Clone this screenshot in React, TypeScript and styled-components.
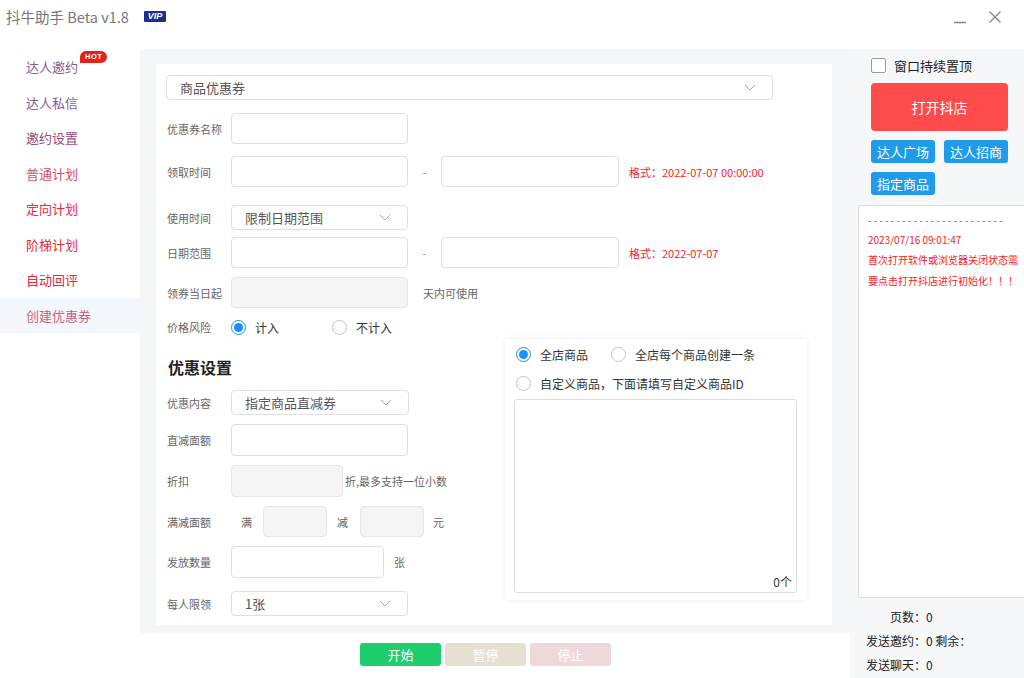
import React from 'react';
import styled, { createGlobalStyle } from 'styled-components';

const GlobalStyle = createGlobalStyle`
  html, body {
    margin: 0;
    padding: 0;
    background: #ffffff;
  }
  body {
    font-family: "Noto Sans CJK SC", "Liberation Sans", sans-serif;
  }
  * {
    box-sizing: border-box;
  }
`;

const Window = styled.div`
  width: 1024px;
  height: 678px;
  display: flex;
  flex-direction: column;
  background: #fff;
  overflow: hidden;
`;

const TitleBar = styled.div`
  height: 49px;
  flex-shrink: 0;
  display: flex;
  align-items: flex-start;
  padding: 7px 22px 0 6px;
`;

const Title = styled.div`
  font-size: 14.5px;
  color: #777;
  line-height: 20px;
  display: flex;
  align-items: center;
`;

const VipBadge = styled.span`
  display: inline-block;
  margin-left: 15px;
  height: 11px;
  padding: 0 4px;
  background: #1c2f8e;
  color: #fff;
  font-family: "Liberation Sans", sans-serif;
  font-style: italic;
  font-weight: bold;
  font-size: 9px;
  line-height: 11px;
  border-radius: 1px;
  margin-top: -2px;
`;

const WinControls = styled.div`
  margin-left: auto;
  display: flex;
  gap: 21px;
  margin-top: 3px;
`;

const Body = styled.div`
  flex: 1;
  display: flex;
  min-height: 0;
`;

const Sidebar = styled.div`
  width: 140px;
  flex-shrink: 0;
  background: #fff;
`;

const NavItem = styled.div<{ $color: string; $active?: boolean }>`
  position: relative;
  height: 35.5px;
  display: flex;
  align-items: center;
  padding-left: 26px;
  font-size: 13px;
  color: ${(p) => p.$color};
  background: ${(p) => (p.$active ? '#f3f7fc' : 'transparent')};
`;

const HotBadge = styled.span`
  position: absolute;
  left: 80px;
  top: 2px;
  height: 12px;
  padding: 0 5px;
  background: #e3231a;
  color: #fff;
  font-family: "Liberation Sans", sans-serif;
  font-weight: bold;
  font-size: 7.5px;
  line-height: 12px;
  letter-spacing: 0.5px;
  border-radius: 6px 6px 6px 0;
`;

const Main = styled.div`
  width: 710px;
  flex-shrink: 0;
  display: flex;
  flex-direction: column;
`;

const Content = styled.div`
  background: #f5f6f8;
  padding: 15px 18px 8px 16px;
`;

const Card = styled.div`
  background: #fff;
  height: 561px;
  padding: 11px 10px 0 10px;
`;

const SelectBox = styled.div<{ $w: number; $h?: number }>`
  width: ${(p) => p.$w}px;
  height: ${(p) => p.$h ?? 25}px;
  border: 1px solid #dcdfe6;
  border-radius: 4px;
  display: flex;
  align-items: center;
  justify-content: space-between;
  padding: 0 16px 0 13px;
  font-size: 13px;
  color: #555;
  background: #fff;
`;

const Row = styled.div<{ $mt: number; $h: number }>`
  display: flex;
  align-items: center;
  margin-top: ${(p) => p.$mt}px;
  height: ${(p) => p.$h}px;
`;

const Label = styled.div`
  width: 65px;
  flex-shrink: 0;
  padding-left: 1px;
  font-size: 11px;
  color: #666;
`;

const InputBox = styled.div<{ $w: number; $disabled?: boolean; $ml?: number }>`
  width: ${(p) => p.$w}px;
  height: 100%;
  margin-left: ${(p) => p.$ml ?? 0}px;
  border: 1px solid ${(p) => (p.$disabled ? '#e6e6e6' : '#dcdfe6')};
  border-radius: 4px;
  background: ${(p) => (p.$disabled ? '#f5f5f5' : '#fff')};
  flex-shrink: 0;
`;

const Dash = styled.div`
  width: 33px;
  text-align: center;
  font-size: 11px;
  color: #888;
`;

const Hint = styled.div<{ $ml: number; $red?: boolean }>`
  margin-left: ${(p) => p.$ml}px;
  font-size: 11px;
  color: ${(p) => (p.$red ? '#f5222d' : '#666')};
  white-space: nowrap;
`;

const RadioItem = styled.div<{ $w?: number }>`
  display: flex;
  align-items: center;
  gap: 9px;
  width: ${(p) => (p.$w ? `${p.$w}px` : 'auto')};
  font-size: 12px;
  color: #333;
  white-space: nowrap;
`;

const RadioDot = styled.span<{ $checked?: boolean }>`
  width: 15px;
  height: 15px;
  border-radius: 50%;
  border: 1px solid ${(p) => (p.$checked ? '#1890ff' : '#c4c4c4')};
  background: #fff;
  display: flex;
  align-items: center;
  justify-content: center;
  flex-shrink: 0;
  &::after {
    content: '';
    width: 9px;
    height: 9px;
    border-radius: 50%;
    background: ${(p) => (p.$checked ? '#1890ff' : 'transparent')};
  }
`;

const Lower = styled.div`
  display: flex;
  margin-top: 1px;
`;

const LeftCol = styled.div`
  width: 339px;
  flex-shrink: 0;
`;

const Heading = styled.div`
  margin-top: 16px;
  height: 24px;
  line-height: 24px;
  padding-left: 2px;
  font-size: 16px;
  font-weight: bold;
  color: #222;
`;

const GoodsPanel = styled.div`
  width: 302px;
  height: 261px;
  background: #fff;
  box-shadow: 0 0 6px rgba(0, 0, 0, 0.08);
  border-radius: 3px;
  padding: 4px 10px 7px 9px;
  display: flex;
  flex-direction: column;
`;

const GoodsRadios = styled.div`
  display: flex;
  align-items: center;
  height: 22px;
  padding-left: 2px;
  font-size: 12.5px;
  & + & {
    margin-top: 7px;
  }
`;

const GoodsArea = styled.div`
  margin-top: 5px;
  flex: 1;
  border: 1px solid #dcdcdc;
  border-radius: 3px;
  display: flex;
  align-items: flex-end;
  justify-content: flex-end;
  padding: 0 4px 2px 0;
  font-size: 12px;
  color: #333;
`;

const Footer = styled.div`
  flex: 1;
  background: #fff;
  display: flex;
  align-items: flex-start;
  gap: 4px;
  padding: 10px 0 0 220px;
`;

const ActionButton = styled.div<{ $bg: string }>`
  width: 81px;
  height: 23px;
  border-radius: 3px;
  background: ${(p) => p.$bg};
  color: #fff;
  font-size: 13px;
  display: flex;
  align-items: center;
  justify-content: center;
`;

const RightPanel = styled.div`
  flex: 1;
  background: #f6f7f9;
  display: flex;
  flex-direction: column;
  padding-top: 8px;
`;

const PinRow = styled.label`
  display: flex;
  align-items: center;
  gap: 8px;
  padding-left: 21px;
  height: 17px;
  font-size: 13px;
  color: #222;
`;

const CheckBox = styled.span`
  width: 15px;
  height: 15px;
  border: 1px solid #9a9a9a;
  border-radius: 2px;
  background: #fff;
`;

const OpenShopButton = styled.div`
  margin: 9px 0 0 21px;
  width: 137px;
  height: 48px;
  border-radius: 4px;
  background: #ff4b4b;
  color: #fff;
  font-size: 14px;
  display: flex;
  align-items: center;
  justify-content: center;
`;

const LinkGrid = styled.div`
  margin: 9px 0 0 21px;
  display: grid;
  grid-template-columns: 64px 64px;
  column-gap: 9px;
  row-gap: 9px;
`;

const LinkButton = styled.div`
  height: 23px;
  border-radius: 3px;
  background: #1f9bea;
  color: #fff;
  font-size: 13px;
  display: flex;
  align-items: center;
  justify-content: center;
`;

const LogPanel = styled.div`
  margin: 10px 0 0 8px;
  height: 393px;
  background: #fff;
  border: 1px solid #dedede;
  border-right: none;
  border-radius: 3px 0 0 3px;
  padding: 4px 0 0 9px;
  color: #f51d1d;
  font-size: 10px;
  line-height: 20px;
  overflow: hidden;
`;

const LogLine = styled.div<{ $mt?: number }>`
  white-space: nowrap;
  margin-top: ${(p) => p.$mt ?? 0}px;
`;

const Stats = styled.div`
  margin-top: 6px;
  display: flex;
  flex-direction: column;
`;

const StatLine = styled.div`
  display: flex;
  height: 24px;
  align-items: center;
  font-size: 12px;
  color: #222;
`;

const StatLabel = styled.span`
  width: 76px;
  text-align: right;
  flex-shrink: 0;
`;

const Chevron = () => (
  <svg width="12" height="7" viewBox="0 0 12 7">
    <path d="M1 1 L6 6 L11 1" fill="none" stroke="#a8a8a8" strokeWidth="1" />
  </svg>
);

const navItems = [
  { text: '达人邀约', color: '#80609c', hot: true },
  { text: '达人私信', color: '#8a5a92' },
  { text: '邀约设置', color: '#9a4c76' },
  { text: '普通计划', color: '#d44e66' },
  { text: '定向计划', color: '#ec2b3a' },
  { text: '阶梯计划', color: '#e62a38' },
  { text: '自动回评', color: '#e62a38' },
  { text: '创建优惠券', color: '#c8627c', active: true },
];

const App: React.FC = () => {
  return (
    <Window>
      <GlobalStyle />
      <TitleBar>
        <Title>
          抖牛助手 Beta v1.8
          <VipBadge>VIP</VipBadge>
        </Title>
        <WinControls>
          <svg width="14" height="14" viewBox="0 0 14 14">
            <path d="M1 12.5 H13" stroke="#8a8a8a" strokeWidth="1.6" />
          </svg>
          <svg width="14" height="14" viewBox="0 0 14 14">
            <path d="M1.5 1.5 L12.5 12.5 M12.5 1.5 L1.5 12.5" stroke="#8a8a8a" strokeWidth="1.4" />
          </svg>
        </WinControls>
      </TitleBar>

      <Body>
        <Sidebar>
          {navItems.map((item) => (
            <NavItem key={item.text} $color={item.color} $active={item.active}>
              {item.text}
              {item.hot && <HotBadge>HOT</HotBadge>}
            </NavItem>
          ))}
        </Sidebar>

        <Main>
          <Content>
            <Card>
              <SelectBox $w={607}>
                <span>商品优惠券</span>
                <Chevron />
              </SelectBox>

              <Row $mt={13} $h={31}>
                <Label>优惠券名称</Label>
                <InputBox $w={177} />
              </Row>

              <Row $mt={12} $h={31}>
                <Label>领取时间</Label>
                <InputBox $w={177} />
                <Dash>-</Dash>
                <InputBox $w={178} />
                <Hint $ml={10} $red>格式：2022-07-07 00:00:00</Hint>
              </Row>

              <Row $mt={18} $h={25}>
                <Label>使用时间</Label>
                <SelectBox $w={177}>
                  <span>限制日期范围</span>
                  <Chevron />
                </SelectBox>
              </Row>

              <Row $mt={7} $h={31}>
                <Label>日期范围</Label>
                <InputBox $w={177} />
                <Dash>-</Dash>
                <InputBox $w={178} />
                <Hint $ml={10} $red>格式：2022-07-07</Hint>
              </Row>

              <Row $mt={9} $h={31}>
                <Label>领券当日起</Label>
                <InputBox $w={177} $disabled />
                <Hint $ml={15}>天内可使用</Hint>
              </Row>

              <Row $mt={8} $h={22}>
                <Label>价格风险</Label>
                <RadioItem $w={101}>
                  <RadioDot $checked />
                  计入
                </RadioItem>
                <RadioItem>
                  <RadioDot />
                  不计入
                </RadioItem>
              </Row>

              <Lower>
                <LeftCol>
                  <Heading>优惠设置</Heading>

                  <Row $mt={11} $h={25}>
                    <Label>优惠内容</Label>
                    <SelectBox $w={178}>
                      <span>指定商品直减券</span>
                      <Chevron />
                    </SelectBox>
                  </Row>

                  <Row $mt={9} $h={32}>
                    <Label>直减面额</Label>
                    <InputBox $w={177} />
                  </Row>

                  <Row $mt={9} $h={32}>
                    <Label>折扣</Label>
                    <InputBox $w={112} $disabled />
                    <Hint $ml={2}>折,最多支持一位小数</Hint>
                  </Row>

                  <Row $mt={9} $h={31}>
                    <Label>满减面额</Label>
                    <Hint $ml={10}>满</Hint>
                    <InputBox $w={64} $ml={11} $disabled />
                    <Hint $ml={10}>减</Hint>
                    <InputBox $w={64} $ml={12} $disabled />
                    <Hint $ml={9}>元</Hint>
                  </Row>

                  <Row $mt={9} $h={32}>
                    <Label>发放数量</Label>
                    <InputBox $w={153} />
                    <Hint $ml={10}>张</Hint>
                  </Row>

                  <Row $mt={13} $h={25}>
                    <Label>每人限领</Label>
                    <SelectBox $w={177}>
                      <span>1张</span>
                      <Chevron />
                    </SelectBox>
                  </Row>
                </LeftCol>

                <GoodsPanel>
                  <GoodsRadios>
                    <RadioItem $w={95}>
                      <RadioDot $checked />
                      全店商品
                    </RadioItem>
                    <RadioItem>
                      <RadioDot />
                      全店每个商品创建一条
                    </RadioItem>
                  </GoodsRadios>
                  <GoodsRadios>
                    <RadioItem>
                      <RadioDot />
                      自定义商品，下面请填写自定义商品ID
                    </RadioItem>
                  </GoodsRadios>
                  <GoodsArea>0个</GoodsArea>
                </GoodsPanel>
              </Lower>
            </Card>
          </Content>

          <Footer>
            <ActionButton $bg="#1ecd6b">开始</ActionButton>
            <ActionButton $bg="#e6e0d2">暂停</ActionButton>
            <ActionButton $bg="#eed8d9">停止</ActionButton>
          </Footer>
        </Main>

        <RightPanel>
          <PinRow>
            <CheckBox />
            窗口持续置顶
          </PinRow>
          <OpenShopButton>打开抖店</OpenShopButton>
          <LinkGrid>
            <LinkButton>达人广场</LinkButton>
            <LinkButton>达人招商</LinkButton>
            <LinkButton>指定商品</LinkButton>
          </LinkGrid>
          <LogPanel>
            <LogLine>- - - - - - - - - - - - - - - - - - - - - - - -</LogLine>
            <LogLine>2023/07/16 09:01:47</LogLine>
            <LogLine>首次打开软件或浏览器关闭状态需</LogLine>
            <LogLine $mt={1}>要点击打开抖店进行初始化！！！</LogLine>
          </LogPanel>
          <Stats>
            <StatLine>
              <StatLabel>页数：</StatLabel>0
            </StatLine>
            <StatLine>
              <StatLabel>发送邀约：</StatLabel>0 剩余：
            </StatLine>
            <StatLine>
              <StatLabel>发送聊天：</StatLabel>0
            </StatLine>
          </Stats>
        </RightPanel>
      </Body>
    </Window>
  );
};

export default App;
